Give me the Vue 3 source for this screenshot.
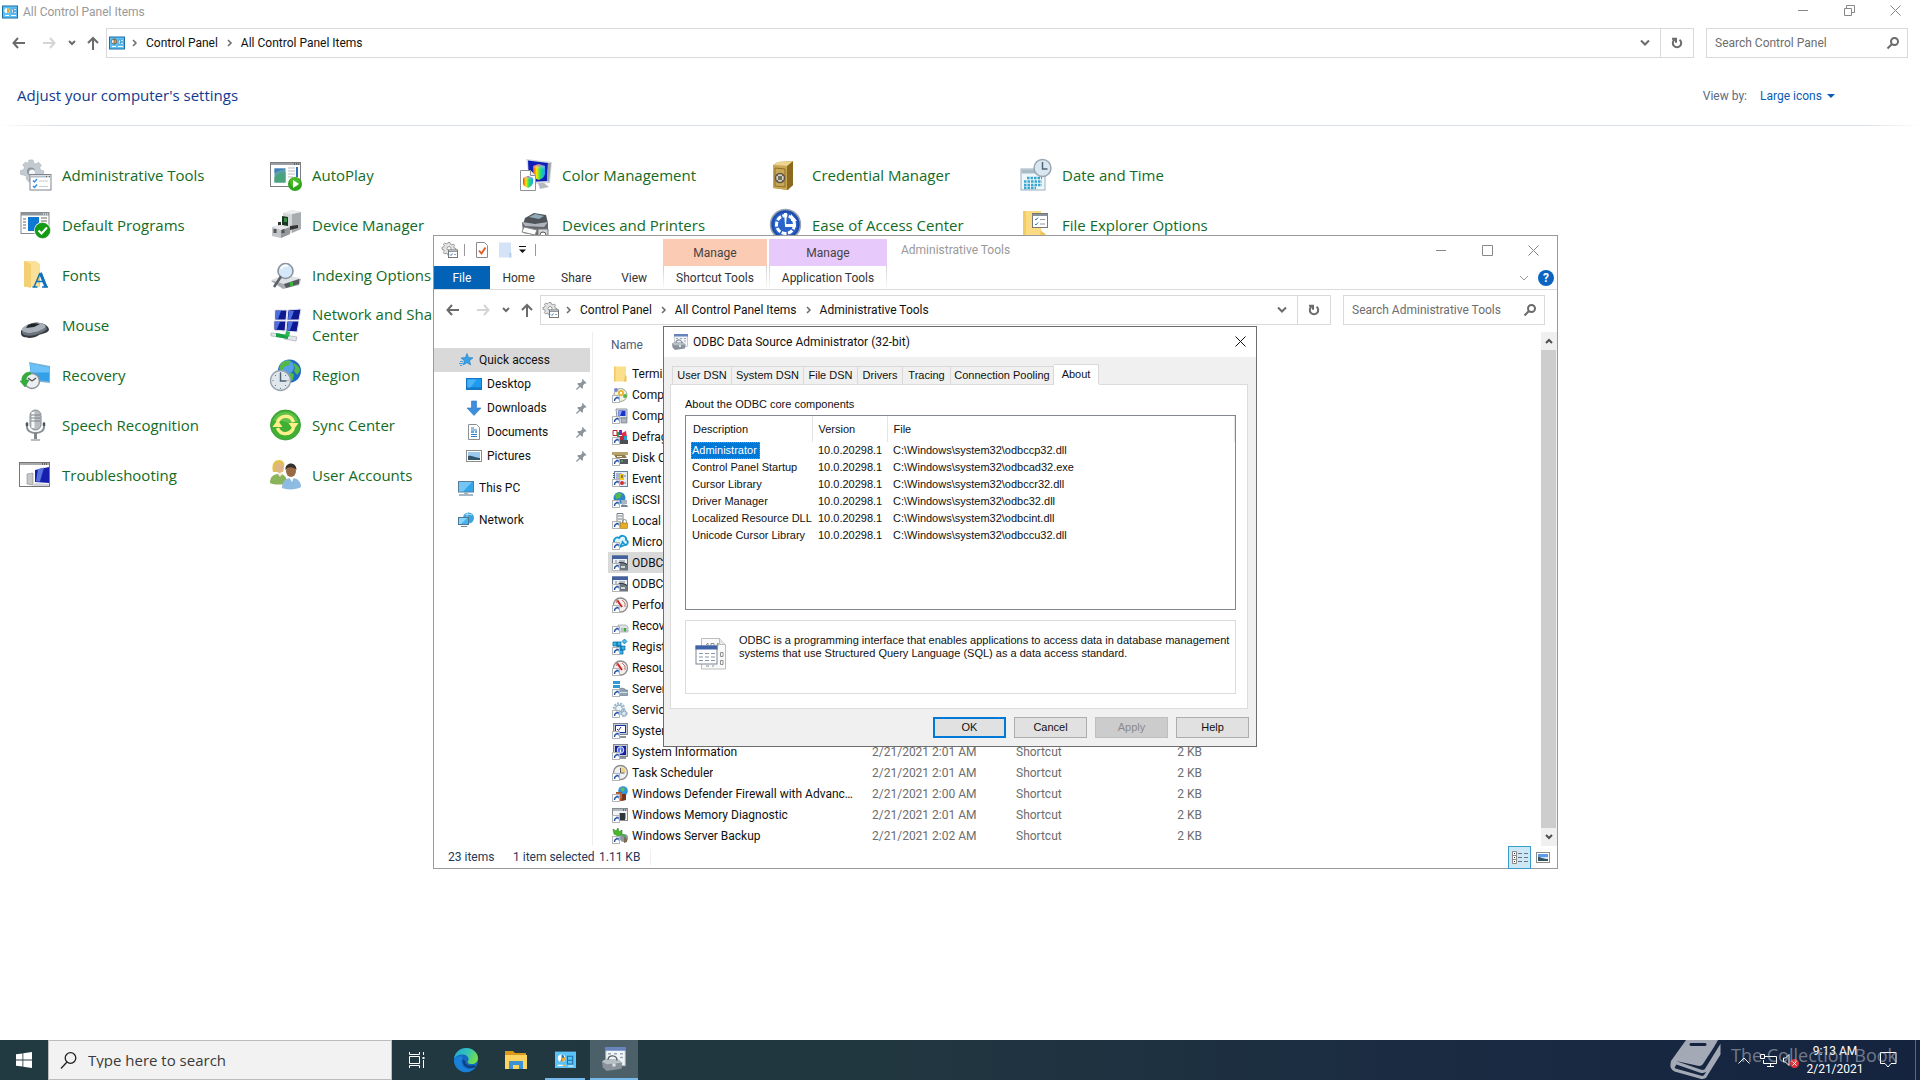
<script setup>
const big = {
  admin: '<g fill="#c3cbd1" stroke="#aab3ba" stroke-width=".6"><path d="M9 1h4l.6 3 2.4 1 2.6-1.700 2.800 2.900-1.700 2.500 1 2.500 3 .6v4l-3 .6-1 2.400-11 4-2.500-3 .3-2.500L3.500 16l-3-.6v-3.900l3-.7 1-2.400L2.800 5.800l2.800-2.800L8 4.500z"/></g><circle cx="11" cy="12.500" r="4" fill="#8d979f"/><circle cx="12" cy="13.500" r="3" fill="#f4f6f8"/><rect x="10" y="15.500" width="21" height="15.500" fill="#fff" stroke="#7c858d"/><path d="M10.500 17.500h20" stroke="#b4bcc4" stroke-width="2"/><path d="M26 17.500h1m2 0h1" stroke="#5c6670"/><path d="M13 21.500l1.500 1.500 2.500-3M13 27l1.500 1.500 2.500-3" stroke="#2f8be0" stroke-width="1.400" fill="none"/><path d="M19 22h9M19 27.500h9" stroke="#c6ccd2"/>',
  autoplay: '<rect x=".5" y="3.500" width="30" height="24" fill="#fff" stroke="#7d7d7d"/><path d="M1 5h29" stroke="#9aa0a6" stroke-width="2"/><path d="M24 5h1m1 0h1m1 0h1" stroke="#333"/><rect x="4" y="9" width="12" height="15" fill="#5b9ea6" stroke="#fff"/><path d="M4.500 14c4-3 8-3 11-4V9.500h-11z" fill="#3e7fc0"/><path d="M4.500 23.500V18c4-3 7-4 11-5v10.500z" fill="#4aa37a"/><path d="M18 9h7M18 12h7M18 15h7M18 18h5" stroke="#b9b9b9"/><path d="M27 8v10" stroke="#2f6fb5" stroke-width="2"/><circle cx="25" cy="25" r="7" fill="#2fa31c"/><circle cx="25" cy="23" r="5" fill="#5cc934" opacity=".6"/><path d="M23 21l6 4-6 4z" fill="#fff"/>',
  color: '<defs><linearGradient id="rb" x1="0" y1="0" x2="1" y2="0"><stop offset="0" stop-color="#ff3020"/><stop offset=".3" stop-color="#ffe800"/><stop offset=".6" stop-color="#20e070"/><stop offset="1" stop-color="#20a0ff"/></linearGradient><linearGradient id="rb2" x1="0" y1="0" x2="0" y2="1"><stop offset="0" stop-color="#c030e0" stop-opacity=".9"/><stop offset=".5" stop-color="#fff" stop-opacity="0"/></linearGradient></defs><path d="M6 0l26 3-2 21-20 1z" fill="#d6dade"/><path d="M8 1.500l20 2.500-1 18-18 1z" fill="#0e1fb8"/><path d="M28 4l3 0-2 19-2-1z" fill="#9ba3aa"/><path d="M18 24h6l5 4-9 2z" fill="#b5bac0"/><path d="M13 7l6-2 6 2v8c-1 4-4 5-6 6-3-1-6-3-6-6z" fill="url(#rb)"/><path d="M13 7l6-2 6 2v8h-12z" fill="url(#rb2)"/><path d="M.5 11.500h10l5 5V31.500H.5z" fill="#fff" stroke="#8c9298"/><path d="M10.500 11.500v5h5" fill="#e6e9ec" stroke="#8c9298"/><path d="M3 19l5-2 5 2v5c-1 3-3 4-5 5-2-1-5-2-5-5z" fill="url(#rb)"/><path d="M3 19l5-2 5 2v5H3z" fill="url(#rb2)"/>',
  credential: '<path d="M3 6l5-3 15-1v24l-5 5-15-2z" fill="#a8852f"/><path d="M3 6l14 1v24L3 29z" fill="#c9a855"/><path d="M17 7l6-5v24l-6 5z" fill="#8b6a20"/><path d="M3 6l5-3 15-1-6 5z" fill="#ecd591"/><path d="M5 9l10 1v18L5 27z" fill="none" stroke="#8f6f28"/><circle cx="10" cy="19" r="4.500" fill="#d8d2bf" stroke="#5a5548" stroke-width="1.500"/><circle cx="10" cy="19" r="2" fill="#6a675c"/><path d="M7 16l6 6M13 16l-6 6" stroke="#6a675c"/>',
  date: '<rect x="1" y="10" width="24" height="21" fill="#eef7fb" stroke="#9db0bb"/><path d="M1.500 10.500h23v4h-23z" fill="#a9bcc6"/><path d="M7 19h15M4 22.500h18M4 26h18M4 29h12" stroke="#3aa6cf" stroke-width="2.500" stroke-dasharray="2.500 1"/><circle cx="22.500" cy="9" r="8.500" fill="#dbe7f0" stroke="#98a7b3" stroke-width="1.500"/><path d="M22.500 3v7h5" stroke="#4e6478" stroke-width="1.500" fill="none"/>',
  defaults: '<rect x="1" y="3.500" width="28" height="21" fill="#fff" stroke="#858b90"/><path d="M1 5h28" stroke="#8e959b" stroke-width="3"/><path d="M23 5h1m1 0h1m1 0h1" stroke="#fff"/><path d="M3 10h3M3 13h3M3 16h3M3 19h3M21 9h6M21 12h6" stroke="#666"/><rect x="8" y="8" width="11" height="14" fill="#0f78d4"/><circle cx="22.500" cy="21.500" r="8.500" fill="#fff"/><circle cx="22.500" cy="21.500" r="7.500" fill="#139c13" stroke="#0b7d0b" stroke-width=".6"/><path d="M18.500 21.500l3 3 5.500-6" stroke="#fff" stroke-width="2" fill="none"/>',
  device: '<path d="M13 4l9-3 9 2v17l-10 4-8-3z" fill="#d4d6d8"/><path d="M22 5l9-2v17l-9 4z" fill="#a9acaf"/><path d="M13 4l9-3 9 2-9 2z" fill="#eceded"/><path d="M12 7l6 1v9l-6-1z" fill="#183a20"/><path d="M14 9h3v4h-3z" fill="#3e8a4a"/><path d="M8 13h3v4H8zM20 17l8-1v3l-8 2z" fill="#333"/><path d="M2 18l8-2 10 2v7l-9 4-9-2z" fill="#c3c6c9"/><path d="M11 21l9-3v7l-9 4z" fill="#94989c"/><path d="M5 20v4M13 20v4" stroke="#555" stroke-width="3"/><path d="M2 18l8-2 10 2-9 3z" fill="#e8e9ea"/>',
  printers: '<path d="M5 9l9-5 12 2 2 8-12 4-13-3z" fill="#4e5459"/><path d="M9 8l6-3 9 2-5 3z" fill="#8faab8"/><path d="M2 13l13 2 13-2v10l-11 3-14-2z" fill="#62676c"/><path d="M2 13l13 2 13-2-4 5-19-1z" fill="#aeb4b9"/><path d="M4 18l13 3-2 5-13-3z" fill="#fff" stroke="#888"/><path d="M18 20h10v12H18z" fill="#d2d6da" stroke="#777"/><circle cx="23" cy="26" r="3" fill="#fff" stroke="#555"/>',
  ease: '<circle cx="15.500" cy="15.500" r="15" fill="#1d4dac" stroke="#9aa4b5" stroke-width="1.500"/><circle cx="15.500" cy="15.500" r="12" fill="#2a63ca"/><circle cx="15.500" cy="15.500" r="9" fill="none" stroke="#fff" stroke-width="3" stroke-dasharray="5 1.500" /><path d="M14 4h3l-1 12h-1zM15 15h11v3H15z" fill="#fff"/><path d="M21 5l6 7h-6z" fill="#fff"/>',
  fileopts: '<path d="M3 2h18v30H3z" fill="#fbdc85"/><path d="M3 2h3v30H3z" fill="#f2cb63"/><path d="M21 20c0 4 5 3 5 7v5h-7z" fill="#f0c65a"/><rect x="12.500" y="4.500" width="15" height="14" fill="#fff" stroke="#777"/><path d="M12.500 6h15" stroke="#8a9299" stroke-width="2"/><path d="M15 10l1 1 2-2.500M15 15l1 1 2-2.500" stroke="#2b7ed1" fill="none"/><path d="M20 10.500h5M20 15h5" stroke="#999"/>',
  fonts: '<path d="M4 2h12l4 3v23H4z" fill="#fbe097"/><path d="M4 2l7 3v24L4 27z" fill="#f4cf73"/><path d="M20 28l-3-9 3-5z" fill="#f1c65f"/><g stroke="#1272b8" fill="none"><path d="M14 28l6-14M21 13.500l5.500 14.500" stroke-width="1.500"/><path d="M20.500 14.500L26 28" stroke-width="3"/><path d="M16.500 22.500h7M12.500 28h5M22 28h6" stroke-width="1.500"/></g>',
  indexing: '<path d="M1 22l12-5 18 3-2 6-16 4z" fill="#a6abb0"/><path d="M1 21l12-5 18 3-14 7z" fill="#dfe2e4"/><path d="M14 25l15-5v5l-13 4z" fill="#55595e"/><rect x="20" y="23" width="3" height="4" fill="#35b535"/><circle cx="15.500" cy="12" r="7.500" fill="#d5e8fa" stroke="#8a949e" stroke-width="1.600"/><path d="M11 10c1-3 4-4 7-3" stroke="#fff" stroke-width="2" fill="none"/><path d="M11 17.500L4 28" stroke="#5b6168" stroke-width="2.500"/>',
  mouse: '<path d="M1 22c3-6 13-10 19-8 6 1 9 4 9 7-1 3-8 4-10 5-5 4-17 4-18-1z" fill="#343a40"/><path d="M2 20c3-5 12-7 18-6 5 1 7 3 5 5-3 3-10 5-16 5-5 0-8-2-7-4z" fill="#a7b0b8"/><path d="M8 16c4-2 8-2 12-1l-6 3-8 1z" fill="#1f2429"/><path d="M2 22c4 3 12 2 17 0 4-2 7-3 7-5l1 3c-3 3-6 4-9 5-5 2-13 3-16-1z" fill="#6d767e"/>',
  network: '<g stroke="#dfe4ee"><path d="M5 1l12 0-1 10-11 0zM18 1l13-1-2 11-12 0zM4 12h12l-1 10-11-1zM17 12h12l-2 11-11-1z" fill="#10188f"/></g><path d="M6 2h5l-3 8H5zM19 2h5l-3 8h-3zM5 13h5l-3 7H5zM18 13h5l-3 8h-3z" fill="#4a6fe0"/><path d="M1 24l9 1 1 3-10-1zM15 26l12 2-1 4-12-2z" fill="#dfe5e8" stroke="#98a2a8" stroke-width=".6"/><path d="M6 24l12 2v4L6 28z" fill="#18a046"/><path d="M16 22l4 1-1 5-4-1z" fill="#24b955"/>',
  recovery: '<path d="M9 3l21 4v17L12 22z" fill="#7fb2d6"/><path d="M10 4.500l19 4v14L11 20z" fill="#33a0ea"/><path d="M10 4.500l19 4v5l-18 0z" fill="#6cc2f8"/><circle cx="12" cy="22" r="7.500" fill="#eceff1" stroke="#8b9399" stroke-width="1.500"/><path d="M12 22l4-3M12 22l-4-3" stroke="#555" fill="none" stroke-width="1.400"/><path d="M10 13c-5 0-9 4-8 9l-2 0 5 6 4-7H6c0-3 2-5 5-6z" fill="#35ad3c" stroke="#1f8a29" stroke-width=".5"/>',
  speech: '<rect x="10" y="1" width="11" height="20" rx="5.500" fill="#b9bdc1" stroke="#84898e"/><path d="M13 3v16" stroke="#f7f8f9" stroke-width="3"/><path d="M11 6h9M11 9h9M11 12h9" stroke="#7c8186"/><path d="M7 13v5c0 8 17 8 17 0v-5" fill="none" stroke="#8b9096" stroke-width="2"/><path d="M15.500 24v6" stroke="#80868b" stroke-width="3"/><path d="M11 31h9" stroke="#a1a6ab" stroke-width="1.500"/><path d="M7 14v3M24 14v3" stroke="#4f5459" stroke-width="2.500"/>',
  region: '<circle cx="19.500" cy="12" r="11.500" fill="#1c69c8"/><circle cx="17" cy="8" r="7" fill="#6db8f2" opacity=".7"/><path d="M11 4c4-3 8-3 10-2l-2 4-5 2-2 4-3-2zM23 4c4 1 7 4 7 8l-3 4-3-4 1-3zM19 13l5 2-1 6-4 2z" fill="#52b848"/><circle cx="10.500" cy="21.500" r="10" fill="#dfe7ed" stroke="#96a3ae" stroke-width="1.300"/><path d="M10.500 14v8h6" stroke="#4b6274" stroke-width="1.500" fill="none"/><path d="M10.500 13v1M10.500 29v1M2.500 21.500h1M17.500 21.500h1M5 16l1 1M16 27l-1-1M16 16l-1 1M5 27l1-1" stroke="#6b7d8a"/>',
  sync: '<circle cx="15.500" cy="16" r="15" fill="#3fb034" stroke="#2f9327" stroke-width=".8"/><path d="M3 12c4-12 21-12 25 0-9 6-16-3-25 0z" fill="#7bd25b" opacity=".55"/><g fill="none" stroke="#ffee8a" stroke-width="3.500"><path d="M7.500 13c3-7 13-8 16 0"/><path d="M23.500 19c-3 7-13 8-16 0"/></g><path d="M18.500 14h10l-5 7zM12.500 18h-10l5-7z" fill="#ffee8a"/>',
  trouble: '<rect x="-.5" y="3.500" width="30" height="24" fill="#fff" stroke="#777"/><path d="M0 5h29" stroke="#aaa" stroke-width="2"/><path d="M22 5h1m1 0h1m1 0h1" stroke="#222"/><path d="M7 15l6-1v12l-6-1z" fill="#c6c9cc" stroke="#888" stroke-width=".6"/><path d="M15 11l14-3v16l-14-1z" fill="#161fae"/><path d="M18 10l6-1.500-4 14-4 0z" fill="#5873dc"/><path d="M15 24l14 1v2H13z" fill="#d0d4d8"/>',
  users: '<path d="M3 13C1 4 5 1 9 1c5 0 6 4 5 7l-1 5z" fill="#e2c24e"/><ellipse cx="9.500" cy="9" rx="4" ry="5" fill="#e0b489"/><path d="M0 24c0-7 4-9 9-9s8 3 8 9c-4 2-13 2-17 0z" fill="#8ab45c"/><path d="M7 14l3 4 3-4z" fill="#f4ecd9"/><ellipse cx="21" cy="12" rx="5" ry="6" fill="#9a6a45"/><path d="M15.500 11c-1-8 11-9 11 0-3-3-8-4-11 0z" fill="#33302e"/><path d="M12 29c0-7 4-10 10-10s9 4 9 9c-4 3-15 3-19 1z" fill="#8dbbe2"/><path d="M19 18l3 5 2-5z" fill="#fff"/>'
}

const sc = '<rect x=".5" y="8.500" width="7" height="7" fill="#fff" stroke="#b5b5b5"/><path d="M2.500 14c0-2 .8-3.200 2.500-3.200" stroke="#1f4fa0" stroke-width="1.300" fill="none"/><path d="M3.800 9.800h2.900v2.900z" fill="#1f4fa0"/>'
const small = {
  cpl: '<rect x=".5" y="2" width="15" height="12" fill="#5cc0f5" stroke="#1c6ea6"/><circle cx="5" cy="6.500" r="2.600" fill="#fff"/><path d="M5 6.500V4a2.500 2.500 0 010 5z" fill="#e8a92f"/><path d="M9.500 5h1.500v4H9.500zM12 4.500h2v2h-2zM12 7.500h2v2h-2z" fill="#fff" stroke="#1c6ea6" stroke-width=".4"/><path d="M3 11.500h4M9 11.500h5" stroke="#fff"/>',
  cplTask: '<rect x="0" y="2" width="16" height="12.500" fill="#5cc3f7"/><circle cx="5" cy="7" r="2.800" fill="#fff"/><path d="M5 7V4.200a2.800 2.800 0 01-1 5.500z" fill="#1d78b8"/><path d="M5 7l2.600-1A2.800 2.800 0 015 9.800z" fill="#e8a92f"/><path d="M9.500 8.500V5.500h4v6h-4v-3h4" fill="none" stroke="#1c6ea6" stroke-width=".8"/><path d="M2 12.500h4" stroke="#fff"/><path d="M6 12.500h2" stroke="#f0b43a"/><path d="M10 13h4" stroke="#c9ecff"/>',
  tools: '<g stroke="#9b9b9b" fill="#e3e3e3"><path d="M6 .5h2l.4 1.700 1.400.6L11.300 2l1.300 1.300-.9 1.500.6 1.300 1.700.4v2H9v3l-3 2-.4-1.700-1.500-.6-1.500.8L1.300 10.600l1-1.500-.6-1.300L0 7.400v-2L1.700 5l.6-1.300-.9-1.500L2.700 1l1.500.9 1.300-.6z"/></g><circle cx="7" cy="6.500" r="2" fill="#fff" stroke="#9b9b9b"/><rect x="6.500" y="8" width="9" height="7.500" fill="#fff" stroke="#777"/><path d="M7 9.500h8" stroke="#8d99a5"/><path d="M8 12.500l1 1 1.500-2" stroke="#2b80d6" fill="none"/><path d="M12 12.500h2" stroke="#999"/>',
  quick: '<path d="M9 1.500l1.500 4 4.500.3-3.500 2.900 1.200 4.300-3.700-2.300L5.300 13l1.100-4.200L3 5.900l4.400-.3z" fill="#3a9fe5" stroke="#1d7dc4" stroke-width=".6"/><path d="M2 9.500h3M1 11.500h4M2 13.500h2" stroke="#3a9fe5"/>',
  desktop: '<rect x=".5" y="2.500" width="15" height="11" fill="#1d9bf0" stroke="#1475c4"/><path d="M1 12h14" stroke="#0f5fa8"/><path d="M1.500 3.500h9l-6 8h-3z" fill="#4ab3f7"/>',
  down: '<path d="M5.500 1h5v7H15L8 15.500 1 8h4.500z" fill="#3d8fdb" stroke="#2a74bd" stroke-width=".6"/>',
  doc: '<path d="M2.500.5h8l3 3v12h-11z" fill="#fff" stroke="#8a8f94"/><path d="M5 4h3M5 6h6M5 10.500h6M5 12.500h6" stroke="#2f7fc4"/><path d="M5 8h3M9 8h2" stroke="#69a5d8" stroke-width="2"/>',
  pic: '<rect x=".5" y="2.500" width="15" height="11" fill="#fff" stroke="#8d8d8d"/><path d="M2 4h12v8H2z" fill="#9cc9ee"/><path d="M2 8c3-1 5 1 12 2v2H2z" fill="#31566b"/>',
  pc: '<rect x=".5" y="1.500" width="15" height="10.500" fill="#35a5ea" stroke="#5b7d96"/><path d="M1 2h13L5 11.500H1z" fill="#75c6f5"/><path d="M1 15h14" stroke="#8aa0b0" stroke-width="1.500"/><path d="M6 12.500h4v1.500H6z" fill="#9fb2c0"/>',
  net: '<circle cx="10.500" cy="6" r="5.500" fill="#3fa3dc"/><path d="M7 2c3 1 5 0 7 1M10 1c-2 3-1 7 1 10" stroke="#b4defa" fill="none"/><rect x=".5" y="5.500" width="10" height="7" fill="#49b3f0" stroke="#4c7898"/><path d="M1 6h8l-6 6H1z" fill="#8ad3f9"/><path d="M3 14.500h6" stroke="#6d8798"/>',
  folder: '<path d="M2 .5h12v15H2z" fill="#fbdf8a"/><path d="M2 .5h1.500v15H2z" fill="#f0ca66"/><path d="M13 9l1.500 1v5.500H12z" fill="#eec35a"/>',
  comsvc: '<circle cx="8.500" cy="8" r="6.500" fill="#eef1e4" stroke="#97a38d"/><circle cx="9" cy="6" r="3" fill="#e9b52a"/><circle cx="9" cy="6" r="1.200" fill="#fff"/><circle cx="13" cy="9" r="2" fill="#5ab54b"/><circle cx="4" cy="3" r="2" fill="#7a83d8"/>' + sc,
  compmgmt: '<path d="M4 1l11 0v9H5z" fill="#dde3e9" stroke="#8c98a3"/><rect x="6.500" y="2.500" width="7" height="5.500" fill="#1c33c4"/><path d="M7 3h3L8 8H7z" fill="#89a4f5"/><path d="M9 10h6v5H9z" fill="#aeb5bc" stroke="#697179" stroke-width=".6"/>' + sc,
  defrag: '<path d="M1 1.500h4v5H1z" fill="#fff" stroke="#b8242b"/><path d="M5 3h2v5H5z" fill="#20a35a"/><path d="M7 1h3v5H7z" fill="#7a2dbc"/><path d="M10 4l4-2 1 6-5 1z" fill="#d7344a"/><path d="M7 7h5v4H7z" fill="#c22c3a"/><path d="M8 11h8v4H8z" fill="#4a4f54"/><path d="M12 7h3v4h-3z" fill="#2a9dd0"/>' + sc,
  disk: '<path d="M0 2h16v3H0z" fill="#b8a36b"/><path d="M2 5h11l2 3H4z" fill="#8b7b4e"/><path d="M5 6h5v1H5z" fill="#eee5c5"/><path d="M7 9h9v5H7z" fill="#52585e"/><path d="M9 11h2" stroke="#57d957"/>' + sc,
  event: '<rect x="2.500" y=".5" width="13" height="15" fill="#e8edf4" stroke="#6681a8"/><path d="M4 3h6M4 5h6M4 7h4M12 5h2M12 12h2" stroke="#5d7fb5"/><path d="M2 2v12" stroke="#55657c" stroke-width="2" stroke-dasharray="1 1"/><path d="M8 3h4v6H8z" fill="#f2c521"/><path d="M10 4v3" stroke="#333"/><circle cx="10" cy="12" r="2" fill="#d12f2f"/>' + sc,
  iscsi: '<circle cx="7.500" cy="6" r="6" fill="#2f84c9"/><path d="M3 3c3-3 6-2 7-1L8 6l-4 1z" fill="#54b84c"/><path d="M9 8l6 0v4l-5 1z" fill="#a8b4c0"/><path d="M9 13h6l1 2h-7z" fill="#6f8598"/>' + sc,
  local: '<path d="M5 .5h6v12H5z" fill="#f3f5f7" stroke="#7a828a"/><path d="M6 3h4M6 6h4M6 9h3" stroke="#7a828a"/><path d="M10.500 10V8.500a2 2 0 014 0V10" stroke="#8c8c8c" fill="none"/><rect x="8.500" y="10" width="7" height="5.500" fill="#e6ad24" stroke="#a8790f" stroke-width=".6"/>' + sc,
  azure: '<path d="M3 10C0 6 4 2 7 4c2-4 8-2 7 2 3 1 2 5-1 5" fill="#dff3fb" stroke="#1597d1" stroke-width="1.800"/><path d="M8 13l5-2-3-4M7 14l4-6" stroke="#1597d1" stroke-width="1.600" fill="none"/>' + sc,
  odbc: '<rect x=".5" y="1" width="15" height="14" fill="#eceff3" stroke="#65717e"/><path d="M0 .5h16v3.500H0z" fill="#42619e"/><path d="M3 6h2M7 6h6M3 8h2" stroke="#7d8894"/><path d="M5 9c3-3 6-2 10 0v6H7z" fill="#6d767e"/><path d="M6 8.500c3-2 6-1 9 1" stroke="#22272c" fill="none"/><path d="M9 11h4v2H9z" fill="#cfd4d8"/>' + sc,
  perf: '<circle cx="8.500" cy="8" r="7" fill="#f3f0ee" stroke="#8d8d8d" stroke-width="1.300"/><path d="M5 3l5 7" stroke="#cf2222" stroke-width="2"/><path d="M4 6l2-3M10 3l3 3 0 4" stroke="#c06a6a" fill="none"/>' + sc,
  recov: '<path d="M6 7h8l2 2v5H7z" fill="#e0e3e6" stroke="#979da3" stroke-width=".7"/><path d="M9 10h6v4H9z" fill="#b9bec3"/><rect x="12" y="10" width="2" height="3.500" fill="#3fae3f"/>' + sc,
  reg: '<path d="M1 3h4v4H1zM5 3h4v4H5zM5 7h4v4H5zM9 7h4v4H9zM7 11h4v4H7z" fill="#35b1e4" stroke="#0e6fa6" stroke-width=".8"/><path d="M12.500 0l2.500 2.500L12.500 5 10 2.500z" fill="#49bdf0" stroke="#0e6fa6" stroke-width=".7"/>' + sc,
  server: '<path d="M1 0h7v3H1zM1 4h7v3H1z" fill="#2f9bd4"/><path d="M7 8l3-1 3 1v1h2.500v5.500H6V9h1z" fill="#8fa3b1" stroke="#5d7484" stroke-width=".6"/><path d="M6 11.500h9.500" stroke="#d8e0e6"/>' + sc,
  services: '<circle cx="7" cy="6.500" r="5" fill="none" stroke="#9fb9cc" stroke-width="2.400" stroke-dasharray="2 1"/><circle cx="7" cy="6.500" r="3.400" fill="#edf3f7" stroke="#83a3ba"/><circle cx="12" cy="11.500" r="2.600" fill="#dfe9f0" stroke="#8aa8bd" stroke-width="1.800" stroke-dasharray="1.500 .6"/>' + sc,
  sysconf: '<rect x="1.500" y=".5" width="14" height="11" fill="#c7ccd2" stroke="#80878e"/><rect x="3.500" y="2.500" width="10" height="7" fill="#fff" stroke="#1730b0"/><path d="M5 6l1.500 1.500L9 4" stroke="#222a9a" fill="none"/><path d="M7 14h7" stroke="#8d959c" stroke-width="2"/>' + sc,
  sysinfo: '<rect x="1.500" y=".5" width="14" height="12" fill="#c7ccd2" stroke="#80878e"/><rect x="3" y="2" width="11" height="9" fill="#16209c"/><circle cx="8.500" cy="6" r="3.300" fill="#4f6fe0" stroke="#dfe6ff"/><path d="M8.500 5.500v3M8.500 3.500v1" stroke="#fff" stroke-width="1.200"/><path d="M8 14h6" stroke="#8d959c" stroke-width="2"/>' + sc,
  task: '<circle cx="8.500" cy="7.500" r="7" fill="#eef0f2" stroke="#8d8d8d" stroke-width="1.400"/><path d="M8.500 7.500V2a5.500 5.500 0 015.500 5.500z" fill="#f2d27a"/><path d="M8.500 3v5h4" stroke="#55606b" fill="none"/>' + sc,
  firewall: '<circle cx="11" cy="5" r="4.800" fill="#2f93d6"/><path d="M8 3c2-2 4-1 5 0l-2 3z" fill="#63c05c"/><path d="M4 6h6v9H4z" fill="#a5532e"/><path d="M4 8h6M4 10h6M4 12h6" stroke="#dba184" stroke-width=".6"/><path d="M10 8l4 0v6l-4 1z" fill="#7c3517"/>' + sc,
  memory: '<rect x=".5" y="1.500" width="15" height="12" fill="#f4f5f6" stroke="#858b90"/><path d="M1 3h14" stroke="#b2b8bd" stroke-width="2"/><path d="M11 3h1m1 0h1" stroke="#222"/><path d="M8 6h5v7H8z" fill="#30353a"/><path d="M7 7h7M7 9h7M7 11h7" stroke="#555" stroke-dasharray="1 5"/>' + sc,
  backup: '<path d="M2 6L1 1l3 2 2-3 1 4 3-2v5l-4 1z" fill="#49b82f" stroke="#23831a" stroke-width=".6"/><circle cx="12" cy="10" r="4" fill="#8e979f"/><path d="M9 7c3-1 5 2 4 5" stroke="#3fae3f" stroke-width="1.600" fill="none"/><path d="M12 9l3 2v3l-3 1z" fill="#7b6a55"/>' + sc,
  toolbox: '<rect x="2.500" y=".5" width="13" height="12" fill="#f1f4f8" stroke="#a5afba" stroke-width=".6"/><path d="M2 0h14v2.500H2z" fill="#6884bd"/><path d="M4 4.500h2M8 4.500h2M12 4.500h2M12 7h2M4 7h1" stroke="#9ba7b5"/><path d="M0 9.500L3 8l8 .5 2.500 2-.5 4-10 1.500L.5 13.500z" fill="#8a939b"/><path d="M0 9.500L3 8l8 .5 2.500 2-10.500 1z" fill="#b7bfc6"/><path d="M4 8.500C4 5 10 5 10 9" stroke="#555e66" stroke-width=".9" fill="none"/><path d="M7 11h2v2H7z" fill="#dde2e6"/>'
}

const columns = [
  [['admin', 'Administrative Tools'], ['defaults', 'Default Programs'], ['fonts', 'Fonts'], ['mouse', 'Mouse'], ['recovery', 'Recovery'], ['speech', 'Speech Recognition'], ['trouble', 'Troubleshooting']],
  [['autoplay', 'AutoPlay'], ['device', 'Device Manager'], ['indexing', 'Indexing Options'], ['network', 'Network and Sharing Center'], ['region', 'Region'], ['sync', 'Sync Center'], ['users', 'User Accounts']],
  [['color', 'Color Management'], ['printers', 'Devices and Printers']],
  [['credential', 'Credential Manager'], ['ease', 'Ease of Access Center']],
  [['date', 'Date and Time'], ['fileopts', 'File Explorer Options']]
]

const pinned = [['desktop', 'Desktop'], ['down', 'Downloads'], ['doc', 'Documents'], ['pic', 'Pictures']]

const files = [
  ['folder', 'Terminal Services', '2/21/2021 2:01 AM', 'File folder', ''],
  ['comsvc', 'Component Services', '2/21/2021 2:01 AM'],
  ['compmgmt', 'Computer Management', '2/21/2021 2:01 AM'],
  ['defrag', 'Defragment and Optimize Drives', '2/21/2021 2:01 AM'],
  ['disk', 'Disk Cleanup', '2/21/2021 2:01 AM'],
  ['event', 'Event Viewer', '2/21/2021 2:01 AM'],
  ['iscsi', 'iSCSI Initiator', '2/21/2021 2:01 AM'],
  ['local', 'Local Security Policy', '2/21/2021 2:01 AM'],
  ['azure', 'Microsoft Azure Services', '2/21/2021 2:01 AM'],
  ['odbc', 'ODBC Data Sources (32-bit)', '2/21/2021 2:01 AM'],
  ['odbc', 'ODBC Data Sources (64-bit)', '2/21/2021 2:01 AM'],
  ['perf', 'Performance Monitor', '2/21/2021 2:01 AM'],
  ['recov', 'RecoveryDrive', '2/21/2021 2:01 AM'],
  ['reg', 'Registry Editor', '2/21/2021 2:01 AM'],
  ['perf', 'Resource Monitor', '2/21/2021 2:01 AM'],
  ['server', 'Server Manager', '2/21/2021 2:01 AM'],
  ['services', 'Services', '2/21/2021 2:01 AM'],
  ['sysconf', 'System Configuration', '2/21/2021 2:01 AM'],
  ['sysinfo', 'System Information', '2/21/2021 2:01 AM'],
  ['task', 'Task Scheduler', '2/21/2021 2:01 AM'],
  ['firewall', 'Windows Defender Firewall with Advanced Security', '2/21/2021 2:00 AM'],
  ['memory', 'Windows Memory Diagnostic', '2/21/2021 2:01 AM'],
  ['backup', 'Windows Server Backup', '2/21/2021 2:02 AM']
].map(([icon, name, date, type = 'Shortcut', size = '2 KB']) => ({ icon, name, date, type, size }))
const selectedFile = 9

const dsnTabs = [['User DSN', 60], ['System DSN', 72], ['File DSN', 54], ['Drivers', 45], ['Tracing', 48], ['Connection Pooling', 103]]
const components = [
  ['Administrator', 'odbccp32.dll'],
  ['Control Panel Startup', 'odbcad32.exe'],
  ['Cursor Library', 'odbccr32.dll'],
  ['Driver Manager', 'odbc32.dll'],
  ['Localized Resource DLL', 'odbcint.dll'],
  ['Unicode Cursor Library', 'odbccu32.dll']
]
</script>

<template>
  <div class="desktop">
    <main class="panel">
      <header class="titlebar">
        <svg class="i16" viewBox="0 0 16 16" v-html="small.cpl"></svg>
        <span class="title">All Control Panel Items</span>
        <div class="winbtns">
          <button aria-label="Minimize"><svg width="11" height="11"><path d="M0 5.500h10" /></svg></button>
          <button aria-label="Restore"><svg width="11" height="11"><path d="M.5 3.500h7v7h-7zM2.500 3V.5h8v7H8" /></svg></button>
          <button aria-label="Close"><svg width="11" height="11"><path d="M.5.5l10 10M10.500.5l-10 10" /></svg></button>
        </div>
      </header>

      <nav class="navrow">
        <button class="back" aria-label="Back"><svg width="14" height="12"><path d="M13 6H1.500M6 1L1.500 6 6 11" /></svg></button>
        <button class="fwd" aria-label="Forward"><svg width="14" height="12"><path d="M1 6h11.500M8 1l4.500 5L8 11" /></svg></button>
        <button class="recent" aria-label="Recent locations"><svg width="8" height="6"><path d="M1 1l3 3 3-3" /></svg></button>
        <button class="up" aria-label="Up"><svg width="12" height="14"><path d="M6 14V2M1 7l5-5 5 5" /></svg></button>
        <div class="address">
          <svg class="i16" viewBox="0 0 16 16" v-html="small.cpl"></svg>
          <svg class="sep" width="5" height="8"><path d="M1 1l3 3-3 3" /></svg>
          <a href="#">Control Panel</a>
          <svg class="sep" width="5" height="8"><path d="M1 1l3 3-3 3" /></svg>
          <a href="#">All Control Panel Items</a>
          <button class="drop" aria-label="Previous locations"><svg width="10" height="8"><path d="M1 1.500l4 4 4-4" /></svg></button>
          <button class="refresh" aria-label="Refresh"><svg width="12" height="14"><path d="M8.500 3.700A4.200 4.200 0 113.500 3.700M1 2.800h4v4" /></svg></button>
        </div>
        <div class="search">
          <input type="text" placeholder="Search Control Panel" aria-label="Search Control Panel" />
          <svg width="12" height="12"><circle cx="7.500" cy="4.500" r="3.500" /><path d="M5 7L.5 11.500" /></svg>
        </div>
      </nav>

      <div class="heading">
        <h1>Adjust your computer's settings</h1>
        <label for="view">View by:</label>
        <select id="view"><option>Large icons</option></select>
        <svg class="tri" width="8" height="4"><path d="M0 0h8L4 4z" /></svg>
      </div>

      <div class="items">
        <div v-for="(col, c) in columns" :key="c" class="itemcol">
          <a v-for="it in col" :key="it[1]" class="item" href="#">
            <svg class="i32" viewBox="0 0 32 32" v-html="big[it[0]]"></svg>
            <span>{{ it[1] }}</span>
          </a>
        </div>
      </div>
    </main>

    <section class="explorer">
      <div class="ribbon">
        <div class="ribbon-left">
          <div class="qat">
            <svg class="i16" viewBox="0 0 16 16" v-html="small.tools"></svg>
            <i class="bar"></i>
            <svg class="i16 props" viewBox="0 0 16 16"><path d="M2.500.5h8l3 3v12h-11z" fill="#fff" stroke="#8a8a8a" /><path d="M5 8.500l2.500 3 4-6" stroke="#e2571b" stroke-width="1.800" fill="none" /></svg>
            <svg class="i16" viewBox="0 0 16 16"><path d="M2 .5h12v15H2z" fill="#d4e3f6" /><path d="M12 10l2.500 1v4.500H12z" fill="#bcd2ee" /></svg>
            <svg class="qdrop" width="8" height="8"><path d="M0 .5h7" stroke="#111" /><path d="M0 3.500h7L3.500 7z" fill="#111" /></svg>
            <i class="bar"></i>
          </div>
          <div class="tabs">
            <button class="file">File</button>
            <button>Home</button>
            <button>Share</button>
            <button>View</button>
          </div>
        </div>
        <div class="ctx ctx-shortcut"><span>Manage</span><button>Shortcut Tools</button></div>
        <div class="ctx ctx-app"><span>Manage</span><button>Application Tools</button></div>
        <div class="ribbon-right">
          <div class="exp-title">
            <span class="title">Administrative Tools</span>
            <div class="winbtns">
              <button aria-label="Minimize"><svg width="11" height="11"><path d="M0 5.500h10" /></svg></button>
              <button aria-label="Maximize"><svg width="11" height="11"><path d="M.5.500h10v10h-10z" /></svg></button>
              <button aria-label="Close"><svg width="11" height="11"><path d="M.5.5l10 10M10.500.5l-10 10" /></svg></button>
            </div>
          </div>
          <div class="ribbon-help">
            <button class="expand" aria-label="Expand the Ribbon"><svg width="10" height="6"><path d="M1 1l4 4 4-4" /></svg></button>
            <button class="help" aria-label="Help">?</button>
          </div>
        </div>
      </div>

      <nav class="navrow">
        <button class="back" aria-label="Back"><svg width="14" height="12"><path d="M13 6H1.500M6 1L1.500 6 6 11" /></svg></button>
        <button class="fwd" aria-label="Forward"><svg width="14" height="12"><path d="M1 6h11.500M8 1l4.500 5L8 11" /></svg></button>
        <button class="recent" aria-label="Recent locations"><svg width="8" height="6"><path d="M1 1l3 3 3-3" /></svg></button>
        <button class="up" aria-label="Up"><svg width="12" height="14"><path d="M6 14V2M1 7l5-5 5 5" /></svg></button>
        <div class="address">
          <svg class="i16" viewBox="0 0 16 16" v-html="small.tools"></svg>
          <svg class="sep" width="5" height="8"><path d="M1 1l3 3-3 3" /></svg>
          <a href="#">Control Panel</a>
          <svg class="sep" width="5" height="8"><path d="M1 1l3 3-3 3" /></svg>
          <a href="#">All Control Panel Items</a>
          <svg class="sep" width="5" height="8"><path d="M1 1l3 3-3 3" /></svg>
          <a href="#">Administrative Tools</a>
          <button class="drop" aria-label="Previous locations"><svg width="10" height="8"><path d="M1 1.500l4 4 4-4" /></svg></button>
          <button class="refresh" aria-label="Refresh"><svg width="12" height="14"><path d="M8.500 3.700A4.200 4.200 0 113.500 3.700M1 2.800h4v4" /></svg></button>
        </div>
        <div class="search">
          <input type="text" placeholder="Search Administrative Tools" aria-label="Search Administrative Tools" />
          <svg width="12" height="12"><circle cx="7.500" cy="4.500" r="3.500" /><path d="M5 7L.5 11.500" /></svg>
        </div>
      </nav>

      <div class="content">
        <aside class="tree">
          <a class="node top selected" href="#"><svg class="i16" viewBox="0 0 16 16" v-html="small.quick"></svg>Quick access</a>
          <a v-for="p in pinned" :key="p[1]" class="node" href="#">
            <svg class="i16" viewBox="0 0 16 16" v-html="small[p[0]]"></svg>{{ p[1] }}
            <svg class="pin" width="11" height="11" viewBox="0 0 11 11"><path d="M6.500 0l4 4-1 .8-.8-.2L7 6.500 7 9 6 9.800 1.200 5l.9-1h2.400L6.300 2.300 5.800 1z" fill="#8e959b" /><path d="M3.800 7.200L.5 10.500" stroke="#8e959b" stroke-width="1.300" /></svg>
          </a>
          <a class="node top apart" href="#"><svg class="i16" viewBox="0 0 16 16" v-html="small.pc"></svg>This PC</a>
          <a class="node top apart" href="#"><svg class="i16" viewBox="0 0 16 16" v-html="small.net"></svg>Network</a>
        </aside>

        <div class="listing">
          <table class="files">
            <colgroup><col class="c-name" /><col class="c-date" /><col class="c-type" /><col class="c-size" /></colgroup>
            <thead>
              <tr><th>Name</th><th>Date modified</th><th>Type</th><th>Size</th></tr>
            </thead>
            <tbody>
              <tr v-for="(f, i) in files" :key="f.name" :class="{ selected: i === selectedFile }">
                <td><div class="name"><svg class="i16" viewBox="0 0 16 16" v-html="small[f.icon]"></svg><span>{{ f.name }}</span></div></td>
                <td>{{ f.date }}</td>
                <td>{{ f.type }}</td>
                <td class="size">{{ f.size }}</td>
              </tr>
            </tbody>
          </table>
        </div>

        <div class="scroll">
          <button aria-label="Scroll up"><svg width="8" height="6"><path d="M1 5l3-3 3 3" /></svg></button>
          <div class="thumb"></div>
          <button aria-label="Scroll down"><svg width="8" height="6"><path d="M1 1l3 3 3-3" /></svg></button>
        </div>
      </div>

      <footer class="status">
        <span class="count">23 items</span>
        <span class="chosen">1 item selected</span>
        <span class="bytes">1.11 KB</span>
        <button class="vbtn on" aria-label="Details"><svg width="16" height="13" viewBox="0 0 16 13"><path d="M.5.5h4v12h-4zM.5 4.500h4M.5 8.500h4" fill="#fff" stroke="#8a8a8a" /><path d="M2 2.500h1M2 6.500h1M2 10.500h1" stroke="#333" /><path d="M6 2.500h4M12 2.500h4M6 6.500h4M12 6.500h4M6 10.500h4M12 10.500h4" stroke="#6e7478" /></svg></button>
        <button class="vbtn" aria-label="Large icons"><svg width="14" height="11" viewBox="0 0 14 11"><rect x=".5" y=".5" width="13" height="10" fill="#fff" stroke="#8a8a8a" /><path d="M2 2h10v3H2z" fill="#5d9be8" /><path d="M2 5h10v2H2z" fill="#cfe4fa" /><path d="M2 5c3 0 5 2 10 2v2H2z" fill="#315565" /></svg></button>
      </footer>
    </section>

    <section class="dialog" role="dialog" aria-labelledby="dlg">
      <header>
        <svg class="i16" viewBox="0 0 16 16" v-html="small.toolbox"></svg>
        <h2 id="dlg">ODBC Data Source Administrator (32-bit)</h2>
        <button class="close" aria-label="Close"><svg width="11" height="11"><path d="M.5.5l10 10M10.500.5l-10 10" /></svg></button>
      </header>
      <div class="dsn-tabs" role="tablist">
        <button v-for="t in dsnTabs" :key="t[0]" role="tab" :style="{ width: t[1] + 'px' }">{{ t[0] }}</button>
        <button class="active" role="tab" aria-selected="true">About</button>
      </div>
      <div class="page">
        <p class="caption">About the ODBC core components</p>
        <div class="listbox">
          <table>
            <colgroup><col class="d1" /><col class="d2" /><col /></colgroup>
            <thead><tr><th>Description</th><th>Version</th><th>File</th></tr></thead>
            <tbody>
              <tr v-for="(c, i) in components" :key="c[0]">
                <td><span :class="{ picked: i === 0 }">{{ c[0] }}</span></td>
                <td>10.0.20298.1</td>
                <td>C:\Windows\system32\{{ c[1] }}</td>
              </tr>
            </tbody>
          </table>
        </div>
        <div class="info">
          <svg class="i32" viewBox="0 0 32 32"><path d="M6.500.5h18l6 6V31H6.500z" fill="#fafafa" stroke="#bdbdbd" /><path d="M24.500.5v6h6" fill="#e6e6e6" stroke="#bdbdbd" /><path d="M11 7l2-2v3M16 5.500h3v3h-3zM22 7l1-2v3M25.500 14.500h2.500v4H25.500zM25.500 22.500h2.500v4H25.500zM11 28h3M18 27v2" fill="none" stroke="#8f8f8f" /><rect x="1" y="8" width="21" height="18" fill="#fff" stroke="#7a8797" /><path d="M.5 7.500h22v4H.5z" fill="#3f62a8" /><path d="M4 15.500h16M4 19h16M4 22.500h16" stroke="#8c97a5" stroke-dasharray="4 2" /></svg>
          <p>ODBC is a programming interface that enables applications to access data in database management systems that use Structured Query Language (SQL) as a data access standard.</p>
        </div>
      </div>
      <div class="actions">
        <button class="primary">OK</button>
        <button>Cancel</button>
        <button disabled>Apply</button>
        <button>Help</button>
      </div>
    </section>

    <footer class="taskbar">
      <button class="start" aria-label="Start"><svg width="16" height="16" viewBox="0 0 16 16" fill="#fff"><path d="M0 2.300L6.500 1.400V7.600H0zM7.300 1.300L16 0v7.600H7.300zM0 8.400h6.500v6.200L0 13.700zM7.300 8.400H16V16l-8.700-1.300z" /></svg></button>
      <label class="tsearch">
        <svg width="17" height="17" viewBox="0 0 17 17"><circle cx="10.500" cy="6" r="5.300" /><path d="M7 10L1 16.500" /></svg>
        <input type="text" placeholder="Type here to search" aria-label="Type here to search" />
      </label>
      <button aria-label="Task View"><svg width="17" height="16" viewBox="0 0 17 16" fill="none" stroke="#fff"><path d="M1.500 4.500h10v7h-10zM1.500 0v2.500h10V0M1.500 16v-2.500h10V16M15.500 0v3M15.500 8v8" /><path d="M14.500 5h2v2h-2z" fill="#fff" stroke="none" /></svg></button>
      <button class="edge" aria-label="Microsoft Edge"><svg width="24" height="24" viewBox="0 0 24 24"><defs><linearGradient id="eg" x1="0" y1="0" x2="1" y2=".4"><stop offset="0" stop-color="#1fa5d8" /><stop offset=".6" stop-color="#35c4b4" /><stop offset="1" stop-color="#6fdc52" /></linearGradient></defs><circle cx="12" cy="12" r="12" fill="#1468c4" /><path d="M0 11C1 4 6 0 12 0c7 0 12 5 12 10 0 4-3 6-6 6-4 0-5-1-4-3 1-1 1-3-1-5-4-3-11-1-13 3z" fill="url(#eg)" /><path d="M9 10c-2 2-2 5 0 8 3 4 8 4 13 1-3 4-8 6-13 5C3 22 0 17 0 12c2-4 7-5 9-2z" fill="#1a80d8" /><path d="M9 11c-1 4 1 8 6 9 3 0 5 0 7-1l-2-2c-6 2-9-1-9-4z" fill="#0f3f7c" /></svg></button>
      <button aria-label="File Explorer"><svg width="22" height="20" viewBox="0 0 22 20"><path d="M0 1h8l2 2h11v5H0z" fill="#d99a1c" /><path d="M0 5h22v14H0z" fill="#fcd462" /><path d="M4 19v-8h14v8h-4v-4H8v4z" fill="#3b93d6" /></svg></button>
      <button class="run half" aria-label="Control Panel"><svg width="21" height="21" viewBox="0 0 16 16" v-html="small.cplTask"></svg></button>
      <button class="run on" aria-label="ODBC"><svg width="24" height="24" viewBox="0 0 16 16" v-html="small.toolbox"></svg></button>
      <div class="tray">
        <svg class="more" width="12" height="7" fill="none" stroke="#fff"><path d="M.5 6.500L6 1l5.500 5.500" /></svg>
        <svg class="lan" width="17" height="15" fill="none" stroke="#fff"><path d="M5 3.500h11.500v7H3.500V7M7 13.500h7M10.500 10.500v3M.5 1.500h4v4h-4z" /></svg>
        <svg class="vol" width="17" height="15" fill="none"><path d="M.5 5h2L6 1.500v11L2.500 9h-2z" stroke="#fff" /><circle cx="11.500" cy="10.500" r="4.500" fill="#e0343b" /><path d="M9.500 8.500l4 4M13.500 8.500l-4 4" stroke="#fff" /></svg>
        <div class="clock"><span>9:13 AM</span><span>2/21/2021</span></div>
        <svg width="17" height="16" fill="none" stroke="#fff"><path d="M.5.5h15.500v11h-5L8 15l-3-3.500H.5z" /></svg>
        <i class="peek"></i>
      </div>
      <div class="mark">
        <svg width="52" height="40" viewBox="0 0 52 40"><path d="M16 0h32l-4 7-11 17c-1 1-2 2-4 2L6 21z" fill="#a3a9b5" /><path d="M4 22l26 9c3 1 5 0 6-1L49 9v5L36 35c-1 2-3 3-6 2L5 30c-4-2-4-6-1-8z" fill="none" stroke="#a3a9b5" stroke-width="3" /><path d="M16 0L1 21c-1 3 0 6 3 8l3-6z" fill="#a3a9b5" /><path d="M21 3h14c2 0 2 3 0 3H21c-2 0-2-3 0-3z" fill="#15233f" /></svg>
        <span>The Collection Book</span>
      </div>
    </footer>
  </div>
</template>

<style>
body { margin: 0; background: #fff; }
</style>

<style scoped>
.desktop {
  --wide: "Open Sans", "Noto Sans", sans-serif;
  --ui: Roboto, "Open Sans", sans-serif;
  position: relative; display: flex; flex-direction: column; min-height: 100vh; overflow: hidden;
  font-family: var(--ui); font-size: 12px; line-height: 16px; color: #111; background: #fff;
}
.desktop * { box-sizing: border-box; }
button { font: inherit; color: inherit; border: 0; padding: 0; background: none; display: flex; align-items: center; justify-content: center; }
input, select { font: inherit; border: 0; padding: 0; background: none; outline: 0; }
a { color: inherit; text-decoration: none; }
h1, h2, p { margin: 0; font-weight: 400; }
svg { display: block; flex: none; overflow: visible; }
.i16 { width: 16px; height: 16px; }
.i32 { width: 32px; height: 32px; }
.title { color: #999; white-space: nowrap; }

.panel { flex: 1; display: flex; flex-direction: column; }
.titlebar { display: flex; align-items: center; gap: 5px; height: 24px; padding-left: 2px; }
.winbtns { display: flex; margin-left: auto; }
.winbtns button { width: 46px; height: 20px; }
.winbtns svg { fill: none; stroke: #888; }
.titlebar .winbtns { padding-right: 2px; align-self: flex-start; }

.navrow { display: flex; align-items: center; padding: 4px 12px 0 5px; }
.navrow svg { fill: none; stroke: #6b6b6b; stroke-width: 2; }
.back { width: 28px; }
.fwd { width: 32px; }
.navrow .fwd svg { stroke: #d5d5d5; }
.recent { width: 14px; }
.up { width: 27px; }
.navrow .i16, .navrow .sep { stroke-width: 1; }
.address { flex: 1; display: flex; align-items: center; height: 30px; border: 1px solid #d9d9d9; padding-left: 2px; white-space: nowrap; }
.address .sep { margin: 0 9px; stroke-width: 1.500; }
.address .i16 { margin-right: -2px; }
.drop { width: 30px; margin-left: auto; }
.refresh { width: 33px; height: 28px; border-left: 1px solid #d9d9d9; }
.search { display: flex; align-items: center; width: 202px; height: 30px; margin-left: 12px; padding: 0 8px; border: 1px solid #d9d9d9; }
.search input { flex: 1; min-width: 0; color: #6d6d6d; }
input::placeholder { color: #6d6d6d; opacity: 1; }

.heading {
  display: flex; align-items: center; height: 68px; padding: 8px 85px 0 17px; border-bottom: 1px solid;
  border-image: linear-gradient(90deg, #fff, #d9dfe6 3%, #d9dfe6 97%, #fff) 1;
}
.heading h1 { flex: 1; padding-bottom: 2px; font-family: var(--wide); font-size: 15px; line-height: 20px; color: #103a90; }
.heading label { color: #5a6a80; margin-right: 13px; }
.heading select { appearance: none; color: #0b5cb5; }
.tri { fill: #0b5cb5; margin-left: 5px; }

.items { display: flex; padding: 24px 20px; }
.itemcol { width: 250px; }
.item { display: flex; align-items: center; gap: 10px; height: 50px; font-family: var(--wide); font-size: 15px; line-height: 21px; color: #146b25; }
.item span { width: 170px; }

.explorer { position: absolute; left: 433px; top: 235px; width: 1125px; border: 1px solid #9a9a9a; background: #fff; }
.ribbon { display: flex; border-bottom: 1px solid #dadbdc; height: 54px; }
.ribbon-left { width: 229px; }
.qat { display: flex; align-items: center; height: 30px; padding: 0 0 2px 8px; }
.bar { width: 1px; height: 12px; margin: 0 6px; background: #999; }
.props { margin: 0 7px 0 3px; }
.qdrop { margin: 0 2px 0 6px; }
.tabs { display: flex; }
.tabs button { width: 58px; height: 23px; color: #333; }
.tabs .file { width: 56px; background: #0262b5; color: #fff; }
.ctx { padding-top: 3px; text-align: center; color: #444; }
.ctx span { display: flex; align-items: center; justify-content: center; height: 27px; }
.ctx button { width: 100%; height: 23px; border: 1px solid; border-width: 0 1px; border-image: linear-gradient(#ccc, #fff) 1; white-space: nowrap; color: #333; }
.ctx-shortcut { width: 104px; margin-right: 2px; }
.ctx-shortcut span { background: #fccbb3; }
.ctx-app { width: 118px; }
.ctx-app span { background: #e8c9fb; }
.ribbon-right { flex: 1; }
.exp-title { display: flex; align-items: center; height: 30px; padding: 0 1px 2px 14px; }
.ribbon-help { display: flex; align-items: center; justify-content: flex-end; gap: 9px; height: 23px; padding-right: 3px; }
.expand svg { fill: none; stroke: #999; }
.help { width: 16px; height: 16px; border-radius: 8px; background: #0a64c0; color: #fff; font-weight: 700; }
.explorer .navrow { padding: 5px 12px 7px 5px; }

.content { display: flex; height: 514px; }
.tree { width: 159px; padding-top: 16px; border-right: 1px solid #eee; }
.node { display: flex; align-items: center; gap: 5px; height: 24px; margin-right: 2px; padding: 0 3px 0 32px; }
.node.top { padding-left: 24px; }
.node.selected { background: #d9d9d9; }
.node.apart { margin-top: 8px; }
.pin { margin-left: auto; }
.listing { flex: 1; padding-left: 15px; }
.files { width: 602px; table-layout: fixed; border-collapse: collapse; }
.files th { height: 31px; padding: 0 8px 5px; text-align: left; font-weight: 400; color: #4c607a; }
.files th:first-child { padding-left: 3px; }
.files td { height: 21px; padding: 0 8px; color: #6d6d6d; white-space: nowrap; }
.files td:first-child { padding: 0 8px 0 4px; color: #111; }
.files .size { text-align: right; }
.files .selected { background: #d9d9d9; }
.c-name { width: 256px; }
.c-date { width: 144px; }
.c-type { width: 112px; }
.name { display: flex; align-items: center; gap: 4px; height: 21px; }
.name span { overflow: hidden; text-overflow: ellipsis; }
.scroll { display: flex; flex-direction: column; width: 16px; background: #f0f0f0; }
.scroll button { height: 18px; }
.scroll svg { fill: none; stroke: #505050; stroke-width: 2; }
.thumb { flex: 1; background: #cdcdcd; margin-right: 1px; }
.status { display: flex; align-items: center; height: 22px; padding-left: 14px; color: #1e395b; }
.count { width: 65px; }
.chosen { width: 86px; white-space: nowrap; }
.bytes { padding-right: 10px; border-right: 1px solid #eee; }
.vbtn { width: 23px; height: 23px; margin-right: 3px; }
.vbtn.on { margin: 0 0 0 auto; border: 1px solid #3c9ac8; background: #cce8f6; }

.dialog { position: absolute; left: 663px; top: 326px; width: 594px; padding-bottom: 8px; border: 1px solid #6e6e6e; background: #f0f0f0; font-family: "Liberation Sans", Arial, sans-serif; font-size: 11px; line-height: 13px; }
.dialog header { display: flex; align-items: center; gap: 5px; height: 30px; padding: 0 10px 0 8px; background: #fff; font-family: var(--ui); font-size: 12px; }
.dialog h2 { flex: 1; font-size: 12px; line-height: 16px; }
.close { padding-bottom: 2px; }
.close svg { fill: none; stroke: #111; }
.dsn-tabs { display: flex; align-items: flex-end; height: 27px; margin-left: 8px; }
.dsn-tabs button { height: 18px; border: 1px solid #d9d9d9; border-width: 1px 1px 0 0; white-space: nowrap; }
.dsn-tabs button:first-child { border-left-width: 1px; }
.dsn-tabs .active { width: 45px; height: 20px; background: #fff; position: relative; box-shadow: 0 1px #fff; }
.page { margin: 0 8px 8px 6px; padding: 13px 11px 14px 14px; border: 1px solid #dcdcdc; background: #fff; }
.caption { margin-bottom: 4px; }
.listbox { height: 195px; border: 1px solid #828790; }
.listbox table { width: 100%; table-layout: fixed; border-collapse: collapse; }
.d1 { width: 126px; }
.d2 { width: 75px; }
.listbox th { height: 26px; padding: 0 6px; font-weight: 400; text-align: left; border-right: 1px solid #e5e5e5; }
.listbox th:first-child { padding-left: 7px; }
.listbox td { height: 17px; padding: 0 6px; white-space: nowrap; }
.listbox td:first-child { padding: 0 0 0 5px; }
.listbox td span { display: inline-block; padding: 0 1px; line-height: 17px; }
.listbox .picked { padding-right: 3px; background: #0078d7; color: #fff; outline: 1px dotted #d0803a; outline-offset: -1px; }
.info { display: flex; gap: 12px; height: 74px; margin-top: 10px; padding: 13px 0 0 9px; border: 1px solid #dcdcdc; }
.info svg { margin-top: 4px; }
.actions { display: flex; justify-content: flex-end; gap: 8px; padding-right: 7px; }
.actions button { width: 73px; height: 21px; border: 1px solid #adadad; background: #e1e1e1; }
.actions .primary { border: 2px solid #0078d7; }
.actions button:disabled { background: #ccc; border-color: #bfbfbf; color: #8b8b8b; }

.taskbar { position: relative; display: flex; height: 40px; background: linear-gradient(90deg, #213941, #21373f 45%, #1a2b42 75%, #15233f); }
.taskbar button { width: 48px; }
.taskbar .edge { width: 52px; }
.tsearch { display: flex; align-items: center; gap: 11px; width: 344px; padding-left: 11px; border: 1px solid #bbb; background: #f2f2f2; }
.tsearch svg { fill: none; stroke: #222; stroke-width: 1.300; }
.tsearch input { flex: 1; font-family: var(--wide); font-size: 15px; }
.tsearch input::placeholder { color: #3a3a3a; }
.taskbar .run { border-bottom: 2px solid #76b9ed; }
.taskbar .half { width: 40px; margin: 0 5px; }
.taskbar .on { width: 48px; background: #4b6068; }
.tray { display: flex; align-items: center; margin-left: auto; padding-right: 4px; color: #fff; }
.more { margin-right: 10px; }
.lan { margin-right: 6px; }
.vol { margin-right: 5px; }
.clock { display: flex; flex-direction: column; align-items: center; width: 60px; margin-right: 15px; line-height: 18px; white-space: nowrap; }
.peek { width: 1px; height: 40px; margin-left: 18px; background: #5c6577; }
.mark { position: absolute; right: 23px; top: 0; display: flex; gap: 9px; color: #c8ccd4; font-family: var(--wide); font-size: 18px; line-height: 30px; pointer-events: none; }
.mark span { opacity: .5; white-space: nowrap; }
</style>
